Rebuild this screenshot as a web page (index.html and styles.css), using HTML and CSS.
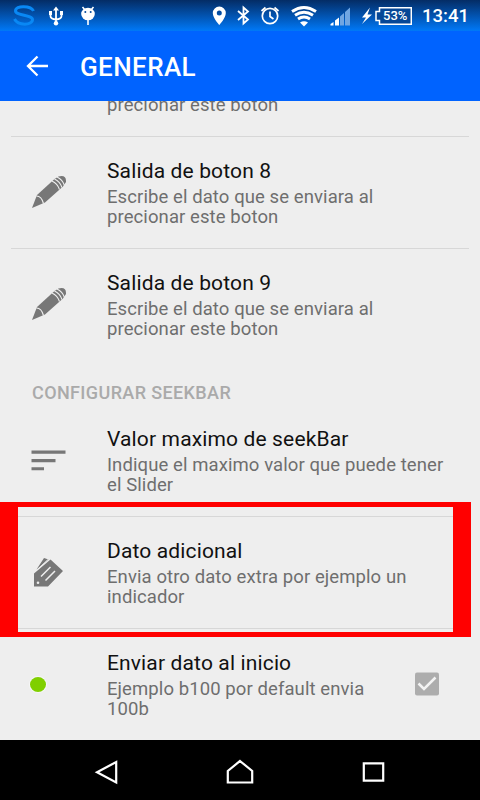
FILE: index.html
```
<!DOCTYPE html>
<html lang="es">
<head>
<meta charset="utf-8">
<title>General</title>
<link rel="stylesheet" href="styles.css">
</head>
<body>
<div class="screen">
  <header class="top">
    <div class="status">
      <svg class="status-icons" width="412" height="31" viewBox="0 0 412 31" fill="none" stroke="#fff">
        <path d="M33.500 11C31 5.500 15.500 5 15.500 11C15.500 15.500 32.500 15 32.500 19.500C32.500 25.500 18 26 14.500 19" stroke="#0988f4" stroke-width="3"/>
        <g stroke-width="1.8"><path d="M56 9v14M50.500 12v4q0 3 5.500 3.500q5.500-.5 5.500-3.500v-4"/></g>
        <path d="M56 6.500l3 4h-6zM49 11h3v4h-3zM60 11h3v4h-3z" fill="#fff" stroke="none"/>
        <circle cx="56" cy="23.300" r="2.200" fill="#fff" stroke="none"/>
        <path d="M82.500 7l2.500 3M93.500 7l-2.500 3M88 19v6" stroke-width="1.600"/>
        <ellipse cx="88" cy="14" rx="6.800" ry="6.300" fill="#fff" stroke="none"/>
        <circle cx="85.300" cy="12" r="1" fill="#064b9c" stroke="none"/><circle cx="90.700" cy="12" r="1" fill="#064b9c" stroke="none"/>
        <path fill="#fff" stroke="none" fill-rule="evenodd" d="M219.300 6.500a6.500 6.500 0 0 0-6.500 6.500c0 5 6.500 12 6.500 12s6.500-7 6.500-12a6.500 6.500 0 0 0-6.500-6.500zm0 4a2.500 2.500 0 1 1 0 5a2.500 2.500 0 0 1 0-5z"/>
        <path d="M238 11l10 8.500-4.500 4V7.500l4.500 4-10 8.500" stroke-width="1.800"/>
        <circle cx="270" cy="16" r="7.700" stroke-width="1.700"/>
        <path d="M270 11.500v5l3.500 2.500M261.500 11l4-3.500M278.500 11l-4-3.500" stroke-width="1.700"/>
        <path d="M292 11.500q12-8 24 0M295 15.300q9-6 18 0M298 19q6-4 12 0" stroke-width="2.900"/>
        <path d="M304 26.500l-4-4q4-2.500 8 0z" fill="#fff" stroke="none"/>
        <path fill="#fff" stroke="none" d="M330.500 25.500v-1.500l3-2v3.500zM335 25.500v-5l4-3v8z"/>
        <path fill="#70a6e2" stroke="none" d="M340 25.500v-9l4-3.500v12.500zM345 25.500V12l5-4.500v18z"/>
        <path fill="#fff" stroke="none" d="M370 7.500l-8 10h4l-4 6.500 10-9.500h-4.500z"/>
        <path fill="#064796" stroke-width="1.500" d="M379.500 7.700H411.300V24.300H379.500V20.500H376V11.500H379.500z"/>
      </svg>
      <span class="battery">53%</span>
      <span class="clock">13:41</span>
    </div>
    <div class="appbar">
      <svg class="back" width="24" height="22" viewBox="0 0 24 22" fill="none" stroke="#fff" stroke-width="2.300"><path d="M23 11H3M12.500 1.500L3 11l9.500 9.500"/></svg>
      <h1>GENERAL</h1>
    </div>
  </header>

  <main class="list">
    <section class="pref cut"><div class="icon"></div><div class="text"><p>precionar este boton</p></div></section>
    <section class="pref ruled">
      <div class="icon"><svg width="36" height="34" viewBox="0 0 36 34"><use href="#pencil"/></svg></div>
      <div class="text"><h2>Salida de boton 8</h2><p>Escribe el dato que se enviara al<br>precionar este boton</p></div>
    </section>
    <section class="pref ruled">
      <div class="icon">
        <svg width="36" height="34" viewBox="0 0 36 34">
          <g id="pencil">
            <path fill="#777" d="M1 33L6 20L23.500 4L27.500 1.500Q35.500-.500 35 7L32 11.500L14 27.500Z"/>
            <path fill="none" stroke="#efefef" stroke-width="1.100" d="M5.500 21Q10.500 21 12.500 28.500M21 6Q26.500 8.500 28.500 14.500M23.500 4Q29 6.500 31 12.500M26 2Q31.500 4.500 33.500 10.500"/>
          </g>
        </svg>
      </div>
      <div class="text"><h2>Salida de boton 9</h2><p>Escribe el dato que se enviara al<br>precionar este boton</p></div>
    </section>
    <h3 class="category">CONFIGURAR SEEKBAR</h3>
    <section class="pref">
      <div class="icon"><svg width="36" height="34" viewBox="0 0 36 34" fill="#777"><path d="M.500 7.500h34v3.300h-34zM.500 16h24v3.300h-24zM.500 24.300h12.500v3h-12.500z"/></svg></div>
      <div class="text"><h2>Valor maximo de seekBar</h2><p>Indique el maximo valor que puede tener<br>el Slider</p></div>
    </section>
    <section class="pref ruled marked">
      <div class="icon">
        <svg width="36" height="34" viewBox="0 0 36 34">
          <path fill="#777" d="M5.500 14.500L13 3L17.500 4.500zM3 18.500L19.500 4.500L32 16L17 31.500H3z"/>
          <path fill="none" stroke="#eee" stroke-width="1" d="M5.500 15.500L17 4.500"/>
          <path fill="none" stroke="#eee" stroke-width="1.500" d="M10 21.500L19.500 12M14.500 25.500L24 16"/>
          <circle cx="7" cy="27.700" r="1.300" fill="#eee"/>
        </svg>
      </div>
      <div class="text"><h2>Dato adicional</h2><p>Envia otro dato extra por ejemplo un<br>indicador</p></div>
      <div class="frame"></div>
    </section>
    <section class="pref ruled">
      <div class="icon"><span class="dot"></span></div>
      <div class="text"><h2>Enviar dato al inicio</h2><p>Ejemplo b100 por default envia<br>100b</p></div>
      <svg class="check" width="24" height="24" viewBox="0 0 24 24"><rect y=".500" width="24" height="23" rx="2" fill="#adadad"/><path d="M3.500 11.500l5.500 5.500L20.500 5.500" fill="none" stroke="#f3f3f3" stroke-width="2.500"/></svg>
    </section>
  </main>

  <nav class="navbar">
    <svg width="480" height="60" viewBox="0 0 480 60" fill="none" stroke="#fff" stroke-width="2.200">
      <path d="M116.200 22v20.500L97 32.200z"/>
      <path d="M240 21l12.200 10v11.500h-24.400V31z"/>
      <path d="M363.800 23.300h19.400v17.400h-19.400z"/>
    </svg>
  </nav>
</div>
</body>
</html>
```
FILE: styles.css
```
* { box-sizing: border-box; }
body { margin: 0; font-family: Roboto, "Liberation Sans", sans-serif; }
h1, h2, h3, p { margin: 0; font-weight: 400; white-space: nowrap; }
.screen { width: 480px; height: 800px; display: flex; flex-direction: column; overflow: hidden; background: #eee; }
.top { height: 101px; flex: none; background: #0063ff; color: #fff; }
.status { height: 31px; display: flex; position: relative; background: linear-gradient(#042c65, #0079f8); }
.status-icons { flex: none; }
.battery { position: absolute; left: 383px; top: 8px; font-size: 13px; line-height: 16px; font-weight: 500; }
.clock { margin-left: 10px; font-size: 18.500px; line-height: 33px; font-weight: 500; }
.appbar { height: 70px; display: flex; align-items: center; padding: 2px 0 0 25px; }
.back { margin-top: -2px; }
h1 { margin-left: 31px; font-size: 26px; font-weight: 500; line-height: 30px; letter-spacing: .4px; }
.list { height: 639px; flex: none; display: flex; flex-direction: column; }
.pref { height: 112px; flex: none; display: flex; position: relative; padding-left: 31px; }
.pref.cut { height: 35px; overflow: hidden; }
.cut .text { padding-top: 0; }
.cut p { margin-top: -6px; }
.ruled { background: linear-gradient(#d7d7d7, #d7d7d7) 11px 0 / 458px 1px no-repeat; }
.icon { width: 76px; padding-top: 39px; flex: none; }
.icon svg { display: block; }
.text { padding-top: 23px; }
h2 { font-size: 21px; line-height: 25px; letter-spacing: .14px; color: #111; }
p { margin-top: 3px; font-size: 18.500px; line-height: 20.400px; letter-spacing: .09px; color: #6e6e6e; }
.category { height: 44px; flex: none; padding-left: 32px; font-size: 18px; line-height: 66px; font-weight: 500; letter-spacing: .38px; color: #aaa; }
.frame { position: absolute; z-index: 1; left: 0; top: -14px; width: 471px; height: 135px; border: solid #f00; border-width: 5px 18px; }
.dot { display: block; width: 16px; height: 15px; margin: 10px 0 0 -1px; border-radius: 50%; background: #80cf00; box-shadow: 0 0 0 1px #f7f7f7; }
.check { position: absolute; left: 415px; top: 44px; }
.navbar { height: 60px; flex: none; background: #000; }
.navbar svg { display: block; }
```
